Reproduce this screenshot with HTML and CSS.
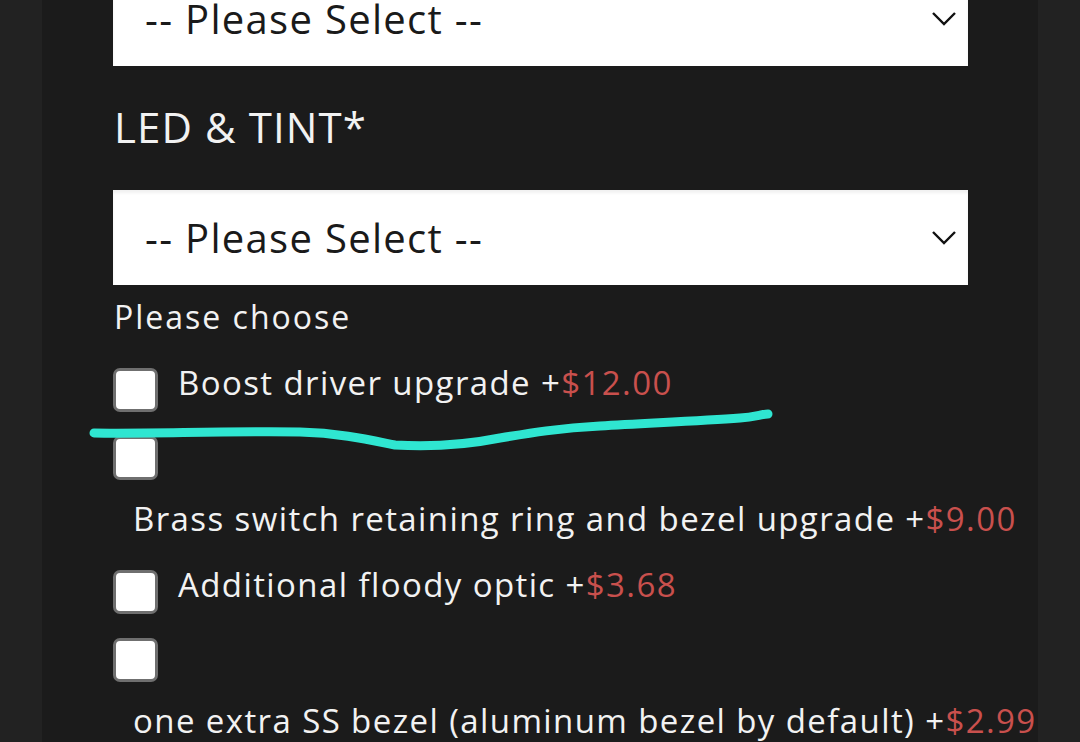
FILE: index.html
```html
<!DOCTYPE html>
<html lang="en">
<head>
    <meta charset="UTF-8">
    <meta name="viewport" content="width=device-width, initial-scale=1.0">
    <title>Product options</title>
    <link rel="stylesheet" href="styles.css">
</head>
<body>
    <div class="page">
        <form class="options-form">
            <div class="select-box first">
                <span class="select-text">-- Please Select --</span>
                <svg class="chevron" viewBox="0 0 24 14" width="24" height="14"><path d="M1 1 L12 12 L23 1" fill="none" stroke="#111" stroke-width="2.4"/></svg>
            </div>

            <label class="field-label">LED &amp; TINT*</label>
            <div class="select-box">
                <span class="select-text">-- Please Select --</span>
                <svg class="chevron" viewBox="0 0 24 14" width="24" height="14"><path d="M1 1 L12 12 L23 1" fill="none" stroke="#111" stroke-width="2.4"/></svg>
            </div>

            <div class="hint">Please choose</div>

            <div class="option">
                <span class="checkbox"></span>
                <span class="option-text">Boost driver upgrade +<span class="price">$12.00</span></span>
            </div>
            <div class="option">
                <span class="checkbox"></span>
                <span class="option-text">Brass switch retaining ring and bezel upgrade +<span class="price">$9.00</span></span>
            </div>
            <div class="option">
                <span class="checkbox"></span>
                <span class="option-text">Additional floody optic +<span class="price">$3.68</span></span>
            </div>
            <div class="option">
                <span class="checkbox"></span>
                <span class="option-text">one extra SS bezel (aluminum bezel by default) +<span class="price">$2.99</span></span>
            </div>
        </form>

        <!-- hand drawn marker line -->
        <svg class="scribble" width="1080" height="742" viewBox="0 0 1080 742">
            <path d="M94 433 C150 434 220 431 300 432 C340 433 370 440 395 445 C430 447 470 444 500 438 C530 433 560 428 600 426 C650 423 700 421 740 418 C755 417 762 414 768 414" fill="none" stroke="#2fe6d1" stroke-width="9" stroke-linecap="round" stroke-linejoin="round"/>
        </svg>
    </div>
</body>
</html>
```

FILE: styles.css
```css
* {
    margin: 0;
    padding: 0;
    box-sizing: border-box;
}

body {
    background: #222222;
    font-family: 'Open Sans', 'DejaVu Sans', sans-serif;
    color: #f2f2f2;
    overflow: hidden;
    height: 742px;
}

.page {
    width: 996px;
    height: 742px;
    margin: 0 auto;
    background: #1b1b1b;
    padding: 0 70px 0 71px;
}

.options-form {
    display: flex;
    flex-direction: column;
}

.select-box {
    height: 95px;
    background: #fff;
    box-shadow: inset 0 3px 3px rgba(0, 0, 0, 0.06);
    display: flex;
    align-items: center;
    justify-content: space-between;
    padding: 0 12px 0 32px;
}

.select-box.first {
    margin-top: -29px;
}

.select-text {
    font-size: 40px;
    letter-spacing: 1.3px;
    color: #1a1a1a;
}

.chevron {
    display: block;
}

.field-label {
    font-size: 42px;
    letter-spacing: 1.1px;
    line-height: 54px;
    margin: 34px 0 36px 1px;
}

.hint {
    font-size: 32px;
    letter-spacing: 2px;
    line-height: 40px;
    margin: 12px 0 19px 1px;
}

.option {
    display: flex;
    flex-wrap: wrap;
    align-items: flex-start;
    row-gap: 12px;
    margin-bottom: 12px;
}

.checkbox {
    width: 45px;
    height: 44px;
    margin-top: 12px;
    background: #fff;
    border: 3px solid #6f6f6f;
    border-radius: 7px;
}

.option-text {
    font-size: 33px;
    letter-spacing: 1.4px;
    line-height: 54px;
    margin-left: 20px;
    white-space: nowrap;
}

.price {
    color: #c9504d;
}

.scribble {
    position: absolute;
    top: 0;
    left: 0;
    pointer-events: none;
}
```
